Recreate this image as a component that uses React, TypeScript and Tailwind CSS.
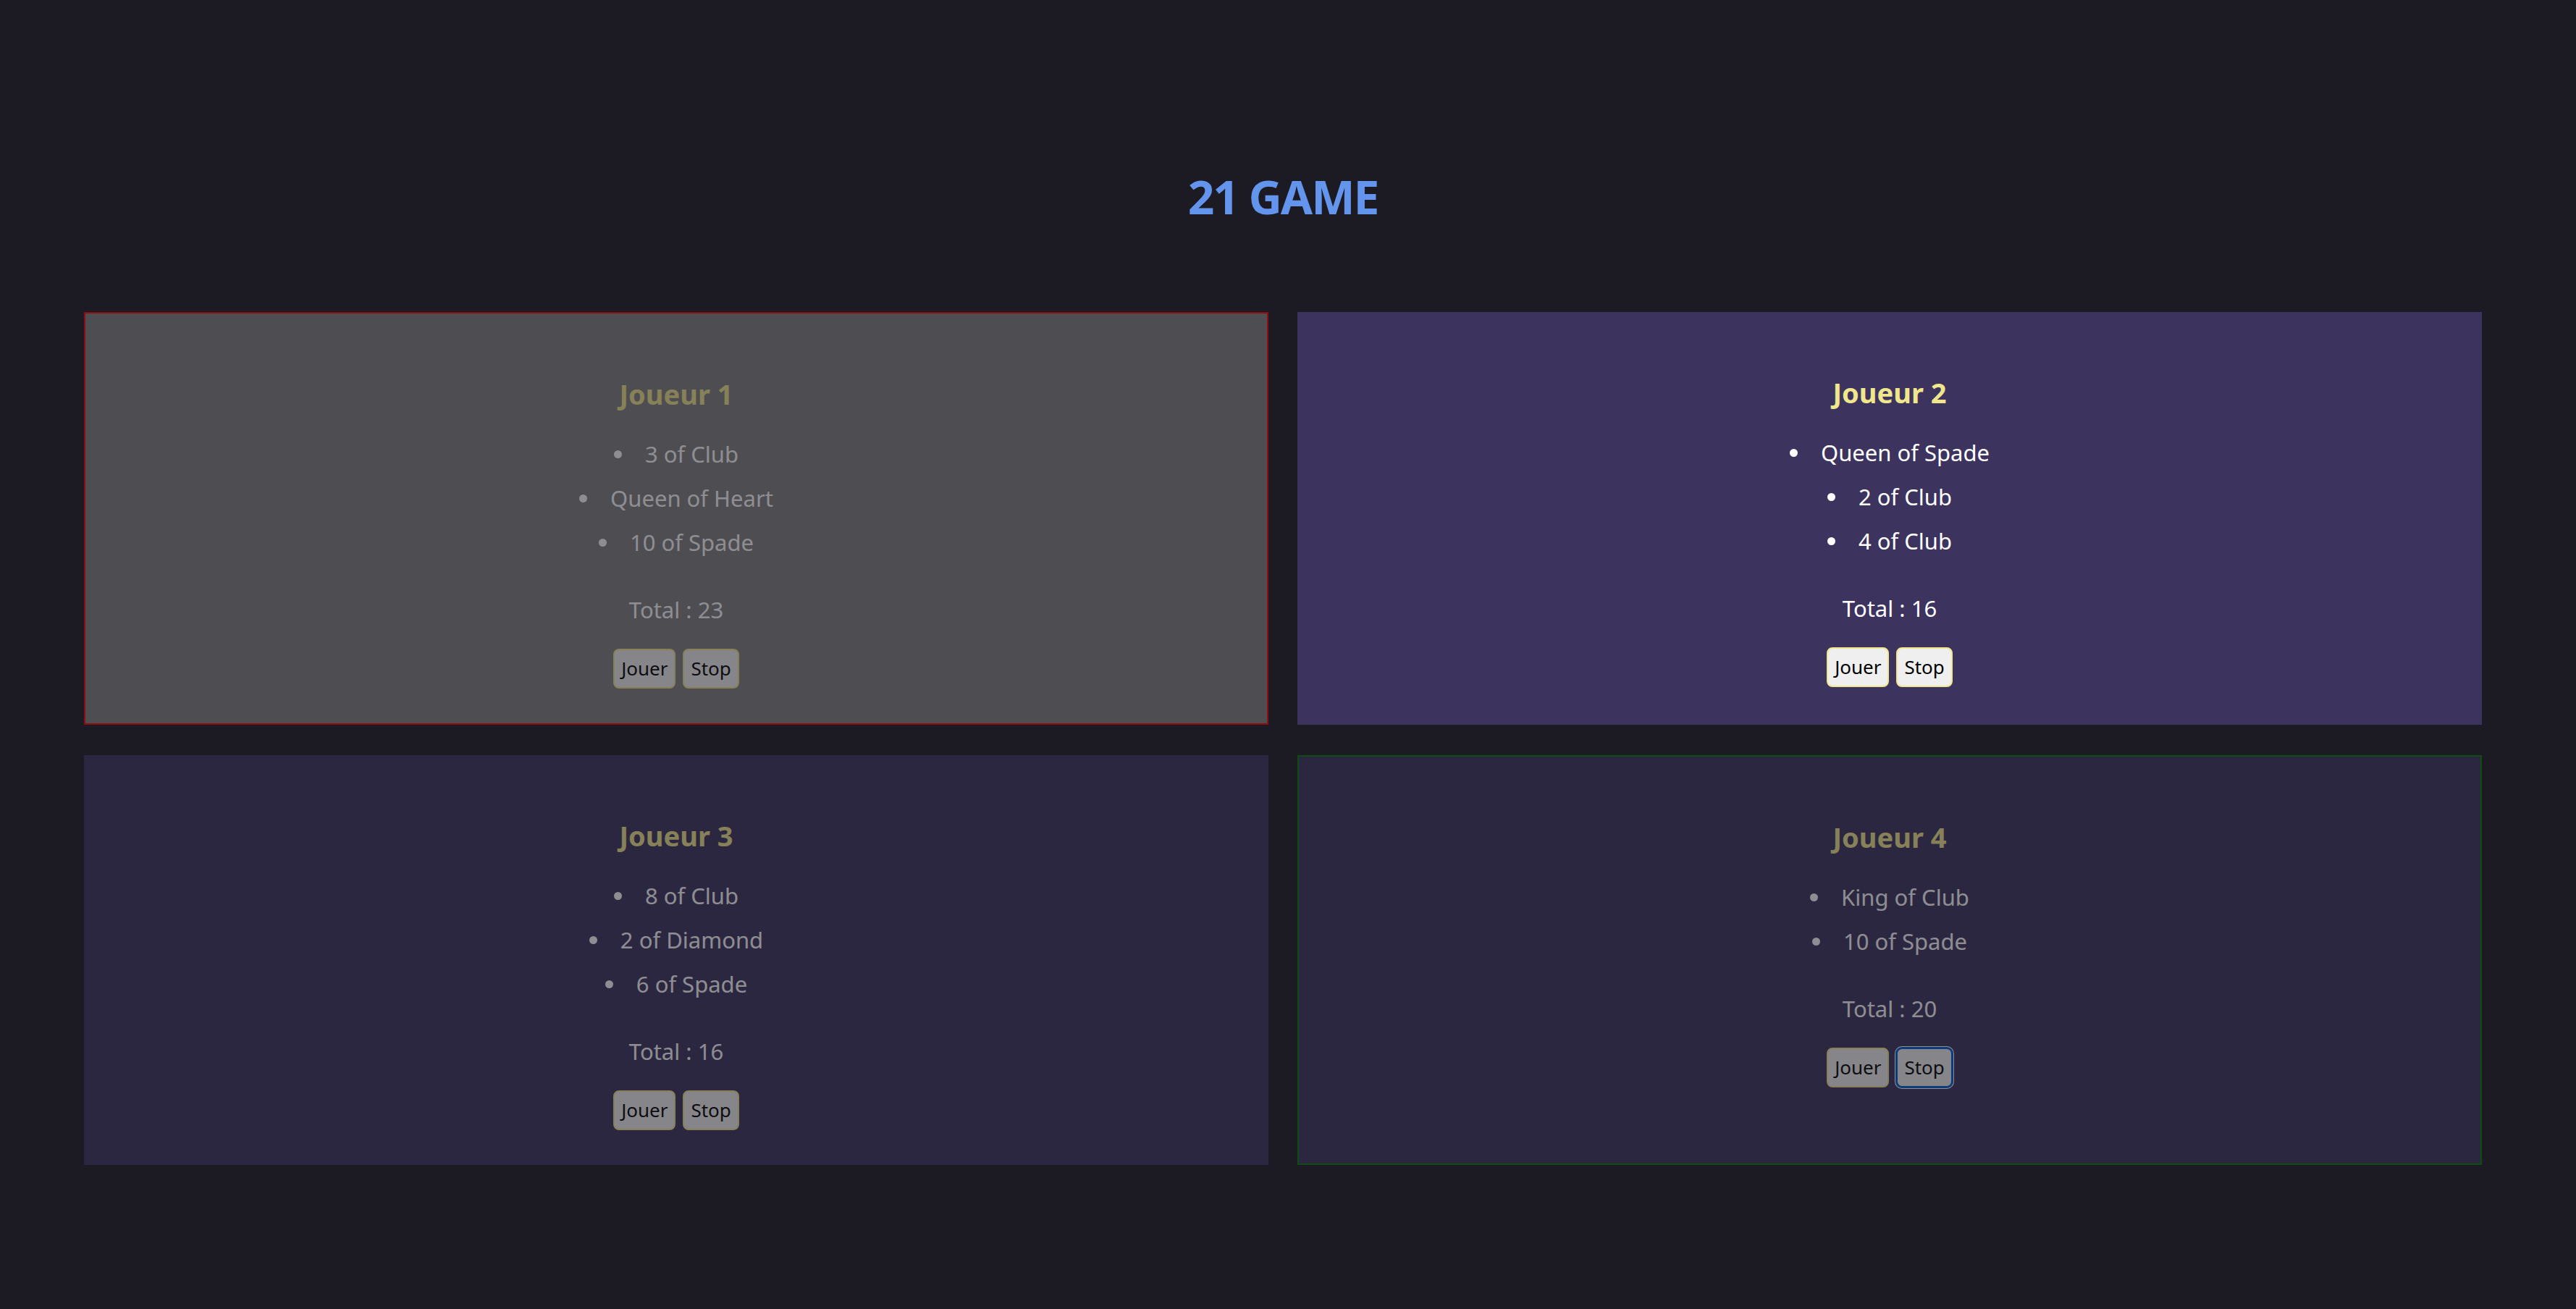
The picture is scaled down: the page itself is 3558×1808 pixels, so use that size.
import React from "react";

type Player = {
  name: string;
  cards: string[];
  total: number;
  active?: boolean;
  border?: string;
  bg: string;
  focusStop?: boolean;
};

const players: Player[] = [
  {
    name: "Joueur 1",
    cards: ["3 of Club", "Queen of Heart", "10 of Spade"],
    total: 23,
    bg: "bg-[#808080]",
    border: "border-2 border-[#ff0000]",
  },
  {
    name: "Joueur 2",
    cards: ["Queen of Spade", "2 of Club", "4 of Club"],
    total: 16,
    active: true,
    bg: "bg-[#3c335e]",
  },
  {
    name: "Joueur 3",
    cards: ["8 of Club", "2 of Diamond", "6 of Spade"],
    total: 16,
    bg: "bg-[#3c335e]",
  },
  {
    name: "Joueur 4",
    cards: ["King of Club", "10 of Spade"],
    total: 20,
    bg: "bg-[#3c335e]",
    border: "border-2 border-[#008000]",
    focusStop: true,
  },
];

function PlayerCard({ player }: { player: Player }) {
  return (
    <div
      className={`flex flex-col items-center pt-[85px] pb-[48px] text-white ${player.bg} ${player.border ?? ""} ${
        player.active ? "" : "opacity-50"
      }`}
    >
      <h2 className="text-[38px] leading-[52px] font-bold text-[#f0e68c]">{player.name}</h2>

      <ul className="mt-[27px] flex flex-col items-center">
        {player.cards.map((card) => (
          <li key={card} className="flex items-center gap-[32px] text-[31px] leading-[61px]">
            <span className="block w-[11px] h-[11px] rounded-full bg-white" />
            <span>{card}</span>
          </li>
        ))}
      </ul>

      <p className="mt-[40px] text-[31px] leading-[44px]">Total : {player.total}</p>

      <div className="mt-[32px] flex gap-[10px]">
        <button className="h-[55px] px-[9px] bg-[#efefef] text-black text-[26px] border-2 border-[#f0e68c] rounded-[8px]">
          Jouer
        </button>
        <button
          className={`h-[55px] px-[9px] bg-[#efefef] text-black text-[26px] border-2 rounded-[8px] ${
            player.focusStop
              ? "border-[#005fcc] shadow-[0_0_0_1px_#005fcc,0_0_0_2px_#ffffff]"
              : "border-[#f0e68c]"
          }`}
        >
          Stop
        </button>
      </div>
    </div>
  );
}

export default function App() {
  return (
    <div
      className="min-h-screen bg-[#1c1b24] pl-[116px] pr-[130px] pt-[222px] pb-[150px]"
      style={{ fontFamily: '"Noto Sans", "Open Sans", sans-serif' }}
    >
      <h1 className="text-center text-[64px] leading-[99px] font-bold tracking-[-2px] text-[#6495ed]">21 GAME</h1>

      <div className="mt-[110px] grid grid-cols-2 gap-x-[40px] gap-y-[42px]">
        {players.map((p) => (
          <PlayerCard key={p.name} player={p} />
        ))}
      </div>
    </div>
  );
}
